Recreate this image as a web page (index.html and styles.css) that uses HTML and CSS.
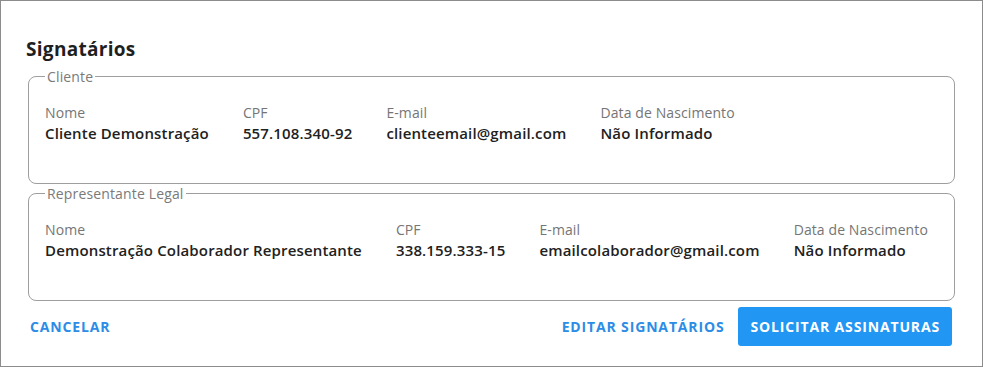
FILE: index.html
```html
<!DOCTYPE html>
<html lang="pt-BR">
<head>
    <meta charset="UTF-8">
    <meta name="viewport" content="width=device-width, initial-scale=1.0">
    <title>Signatários</title>
    <link rel="stylesheet" href="styles.css">
</head>
<body>
    <!-- caixa de signatários -->
    <div class="signers-box">
        <h2 class="signers-title">Signatários</h2>

        <fieldset class="signer-group">
            <legend>Cliente</legend>
            <div class="signer-row">
                <div class="signer-field">
                    <div class="field-label">Nome</div>
                    <div class="field-value">Cliente Demonstração</div>
                </div>
                <div class="signer-field">
                    <div class="field-label">CPF</div>
                    <div class="field-value">557.108.340-92</div>
                </div>
                <div class="signer-field">
                    <div class="field-label">E-mail</div>
                    <div class="field-value">clienteemail@gmail.com</div>
                </div>
                <div class="signer-field">
                    <div class="field-label">Data de Nascimento</div>
                    <div class="field-value">Não Informado</div>
                </div>
            </div>
        </fieldset>

        <fieldset class="signer-group">
            <legend>Representante Legal</legend>
            <div class="signer-row">
                <div class="signer-field">
                    <div class="field-label">Nome</div>
                    <div class="field-value">Demonstração Colaborador Representante</div>
                </div>
                <div class="signer-field">
                    <div class="field-label">CPF</div>
                    <div class="field-value">338.159.333-15</div>
                </div>
                <div class="signer-field">
                    <div class="field-label">E-mail</div>
                    <div class="field-value">emailcolaborador@gmail.com</div>
                </div>
                <div class="signer-field">
                    <div class="field-label">Data de Nascimento</div>
                    <div class="field-value">Não Informado</div>
                </div>
            </div>
        </fieldset>

        <div class="signers-actions">
            <button type="button" class="btn-text btn-cancel">Cancelar</button>
            <div class="actions-right">
                <button type="button" class="btn-text">Editar Signatários</button>
                <button type="button" class="btn-primary">Solicitar Assinaturas</button>
            </div>
        </div>
    </div>
</body>
</html>
```

FILE: styles.css
```css
html, body {
    margin: 0;
    padding: 0;
    background: #fff;
}

body {
    font-family: "Open Sans", "Liberation Sans", sans-serif;
}

.signers-box {
    box-sizing: border-box;
    width: 983px;
    height: 367px;
    border: 1px solid #8c8c8c;
    padding: 0 27px 0 26px;
}

.signers-title {
    margin: 35px 0 5px -1px;
    font-size: 19px;
    line-height: 26px;
    font-weight: 700;
    letter-spacing: 0.3px;
    color: #1f1f1f;
}

.signer-group {
    margin: 0 0 0 1px;
    border: 1px solid #9e9e9e;
    border-radius: 8px;
    padding: 17px 16px 40px 16px;
}

.signer-group legend {
    padding: 0 2px;
    font-size: 14px;
    line-height: 19px;
    letter-spacing: 0.15px;
    color: #7a7a7a;
}

.signer-row {
    display: flex;
    gap: 34px;
}

.field-label {
    font-size: 14px;
    line-height: 20px;
    letter-spacing: 0.1px;
    color: #757575;
}

.field-value {
    font-size: 15px;
    line-height: 20px;
    font-weight: 600;
    letter-spacing: 0.15px;
    color: #212121;
}

.signers-actions {
    display: flex;
    justify-content: space-between;
    align-items: center;
    margin: 6px 3px 0 1px;
}

.actions-right {
    display: flex;
    align-items: center;
    gap: 6px;
}

.btn-text, .btn-primary {
    font-family: "Open Sans", "Liberation Sans", sans-serif;
    font-size: 14px;
    font-weight: 700;
    letter-spacing: 0.85px;
    text-transform: uppercase;
    border: none;
    cursor: pointer;
    line-height: 20px;
}

.btn-text {
    background: none;
    color: #2d8ce6;
    padding: 9px 8px;
}

.btn-cancel {
    padding-left: 2px;
}

.btn-primary {
    background: #2196f3;
    color: #fff;
    border-radius: 3px;
    height: 39px;
    padding: 0 12px;
}
```
